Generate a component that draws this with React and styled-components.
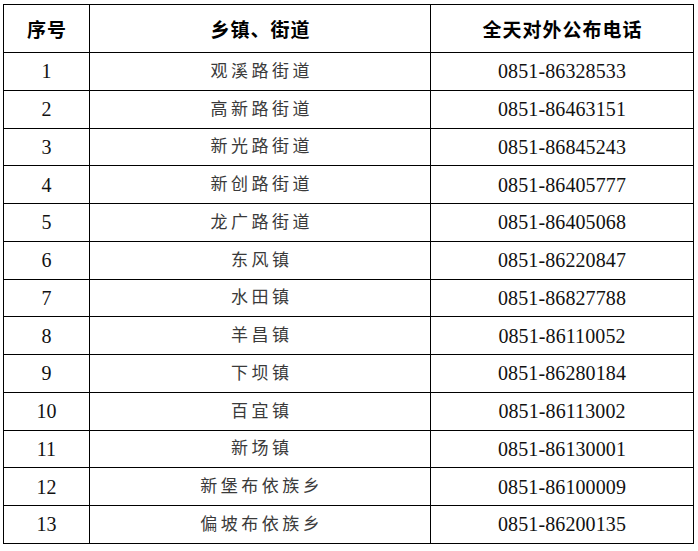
import React from 'react';
import styled, { createGlobalStyle } from 'styled-components';

// ---------- global ----------

const GlobalStyle = createGlobalStyle`
  html, body {
    margin: 0;
    padding: 0;
    background: #ffffff;
  }
`;

// ---------- styling ----------

const Page = styled.div`
  width: 698px;
  height: 551px;
  padding: 4px 0 0 3px;
  box-sizing: border-box;
  background: #ffffff;
`;

const Table = styled.table`
  border-collapse: collapse;
  table-layout: fixed;
  width: 690px;
  font-family: "Liberation Serif", "Noto Sans CJK SC", serif;
  color: #1a1a1a;
`;

const Col = styled.col`
  width: ${(p) => p.$w}px;
`;

const HeadCell = styled.th`
  height: 47px;
  border: 1px solid #000;
  padding: 0 0 0 1px;
  text-align: center;
  vertical-align: middle;
  font-family: "Noto Sans CJK SC", sans-serif;
  font-size: 19px;
  font-weight: 700;
  color: #000;
  letter-spacing: 1px;
`;

const Row = styled.tr`
  height: 37.75px;
`;

const Cell = styled.td`
  border: 1px solid #000;
  padding: 0;
  text-align: center;
  vertical-align: middle;
  font-size: ${(p) => (p.$cjk ? '17px' : '20px')};
  font-weight: 400;
  letter-spacing: ${(p) => (p.$cjk ? '3.5px' : '0.1px')};
  color: ${(p) => (p.$cjk ? '#3a3a3a' : '#111')};
  line-height: 1;
  padding-left: ${(p) => (p.$cjk ? '3.5px' : '0')};
`;

// ---------- data ----------

const rows = [
  ['观溪路街道', '0851-86328533'],
  ['高新路街道', '0851-86463151'],
  ['新光路街道', '0851-86845243'],
  ['新创路街道', '0851-86405777'],
  ['龙广路街道', '0851-86405068'],
  ['东风镇', '0851-86220847'],
  ['水田镇', '0851-86827788'],
  ['羊昌镇', '0851-86110052'],
  ['下坝镇', '0851-86280184'],
  ['百宜镇', '0851-86113002'],
  ['新场镇', '0851-86130001'],
  ['新堡布依族乡', '0851-86100009'],
  ['偏坡布依族乡', '0851-86200135'],
];

// ---------- component ----------

export default function App() {
  return (
    <Page>
      <GlobalStyle />
      <Table>
        <colgroup>
          <Col $w={86} />
          <Col $w={341} />
          <Col $w={263} />
        </colgroup>
        <thead>
          <tr>
            <HeadCell>序号</HeadCell>
            <HeadCell>乡镇、街道</HeadCell>
            <HeadCell>全天对外公布电话</HeadCell>
          </tr>
        </thead>
        <tbody>
          {rows.map(([name, phone], i) => (
            <Row key={name}>
              <Cell>{i + 1}</Cell>
              <Cell $cjk>{name}</Cell>
              <Cell>{phone}</Cell>
            </Row>
          ))}
        </tbody>
      </Table>
    </Page>
  );
}
